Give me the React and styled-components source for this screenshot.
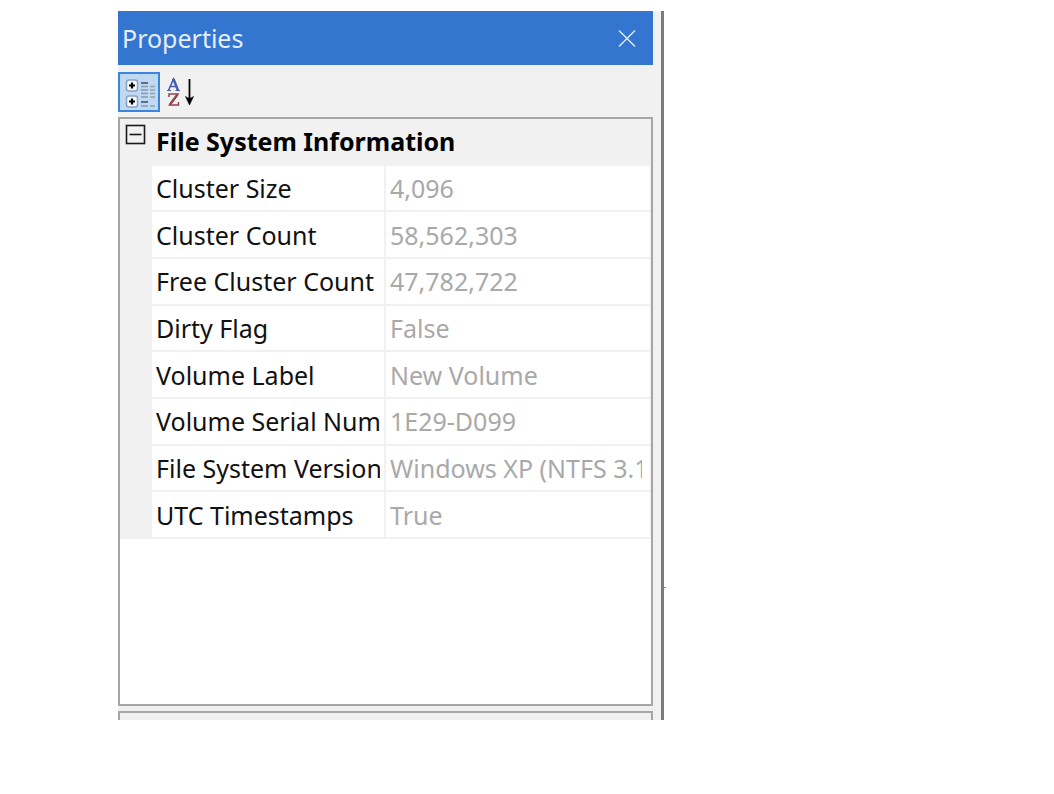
import React from 'react'
import styled, { createGlobalStyle } from 'styled-components'

const GlobalStyle = createGlobalStyle`
  body {
    margin: 0;
    background-color: #fff;
    font-family: 'Noto Sans', 'Open Sans', sans-serif;
  }
`

const Page = styled.main`
  padding: 11px 390px 74px 118px;
`

const Panel = styled.section`
  position: relative;
  min-width: 420px;
  box-sizing: border-box;
  padding-right: 8px;
  background-color: #f1f1f1;
  border-right: 3px solid #7b7b7b;
`

const SplitMark = styled.span`
  position: absolute;
  right: -5px;
  bottom: 132px;
  width: 2px;
  height: 1px;
  background-color: #8a8a8a;
`

const TitleBar = styled.header`
  display: flex;
  align-items: center;
  justify-content: space-between;
  height: 54px;
  padding: 0 16px 0 4px;
  background-color: #3375cf;
`

const Title = styled.h1`
  margin: 0;
  font-size: 25px;
  font-weight: 400;
  color: #e6eefa;
`

const CloseButton = styled.button`
  display: flex;
  padding: 0;
  border: 0;
  background: none;
`

const Toolbar = styled.div`
  display: flex;
  align-items: center;
  box-sizing: border-box;
  height: 52px;
  padding-top: 2px;
`

const ToolButton = styled.button`
  display: flex;
  align-items: center;
  justify-content: center;
  width: 42px;
  height: 40px;
  padding: 0;
  border: 2px solid ${(props) => (props.$active ? '#3a86de' : 'transparent')};
  background-color: ${(props) => (props.$active ? '#bfd9f2' : 'transparent')};
`

const GridBox = styled.div`
  box-sizing: border-box;
  min-height: 589px;
  border: 2px solid #a6a6a6;
  background-color: #fff;
`

const Table = styled.table`
  width: 100%;
  height: 420px;
  table-layout: fixed;
  border-collapse: separate;
  border-spacing: 0;
  font-size: 25px;
  line-height: 34px;
`

const GutterCol = styled.col`
  width: 32px;
`

const NameCol = styled.col`
  width: 234px;
`

const Gutter = styled.td`
  padding: 0;
  vertical-align: top;
  background-color: #f1f1f1;
`

const ToggleButton = styled.button`
  display: flex;
  margin: 5px 0 0 5px;
  padding: 0;
  border: 0;
  background: none;
`

const Category = styled.th`
  padding: 0 4px;
  border-bottom: 2px solid #f1f1f1;
  text-align: left;
  font-weight: 700;
  color: #000;
  background-color: #f1f1f1;
`

const Name = styled.th`
  padding: 0 4px;
  border-right: 2px solid #f1f1f1;
  border-bottom: 2px solid #f1f1f1;
  text-align: left;
  font-weight: 400;
  color: #111;
`

const Value = styled.td`
  padding: 0 8px 0 4px;
  border-right: 1px solid #f1f1f1;
  border-bottom: 2px solid #f1f1f1;
  color: #a9a9a9;
`

const Clip = styled.div`
  overflow: hidden;
  white-space: nowrap;
`

const HelpBox = styled.div`
  height: 7px;
  margin-top: 5px;
  border: 2px solid #a6a6a6;
  border-bottom: 0;
`

const rows = [
  ['Cluster Size', '4,096'],
  ['Cluster Count', '58,562,303'],
  ['Free Cluster Count', '47,782,722'],
  ['Dirty Flag', 'False'],
  ['Volume Label', 'New Volume'],
  ['Volume Serial Number', '1E29-D099'],
  ['File System Version', 'Windows XP (NTFS 3.1)'],
  ['UTC Timestamps', 'True'],
]

const CloseIcon = () => (
  <svg width="20" height="20" viewBox="0 0 20 20" aria-hidden="true">
    <path d="M2 2.500L18 18.500M18 2.500L2 18.500" stroke="#e3edf9" strokeWidth="1.4" fill="none" />
  </svg>
)

const CategorizedIcon = () => (
  <svg width="32" height="32" viewBox="0 0 32 32" aria-hidden="true">
    {[4, 20].map((y) => (
      <g key={y}>
        <rect x="3.5" y={y} width="11" height="11" rx="2.5" fill="#f8fafd" stroke="#8ba4c6" strokeWidth="1.5" />
        <path d={`M6 ${y + 5.5}h6M9 ${y + 2.5}v6`} stroke="#000" strokeWidth="2.2" />
      </g>
    ))}
    <path d="M18 7h7M18 26h7" stroke="#3f4a59" strokeWidth="1.5" />
    <path d="M18 10.500h7M18 14h7M18 17.500h7M18 21h7M18 30h7" stroke="#8c98ac" strokeWidth="1.5" />
    <path d="M27 10.500h5M27 14h5M27 17.500h5M27 21h5M27 30h5" stroke="#8fa3a8" strokeWidth="1.5" />
  </svg>
)

const SortIcon = () => (
  <svg width="30" height="32" viewBox="0 0 30 32" aria-hidden="true">
    <path d="M2.500 14.500L7.500 3L12 14.500M4.500 10.500H10" stroke="#4a5bb0" strokeWidth="1.600" fill="none" />
    <path d="M7.500 3L12 14.500" stroke="#4a5bb0" strokeWidth="2.400" />
    <path d="M1 14.500H5M9.500 14.500H14M6 3.500H8.500" stroke="#4a5bb0" strokeWidth="1.200" />
    <path d="M3 21V18H12L3.500 29H12.500V26" stroke="#974148" strokeWidth="1.500" fill="none" />
    <path d="M11.500 18.500L4 28.500" stroke="#974148" strokeWidth="2.400" />
    <path d="M23.500 3V25" stroke="#000" strokeWidth="1.800" />
    <path d="M19.500 20.500L22 22H25L27.500 20.500L23.500 29Z" fill="#000" stroke="#000" strokeWidth="0.600" />
  </svg>
)

const MinusIcon = () => (
  <svg width="21" height="21" viewBox="0 0 21 21" aria-hidden="true">
    <rect x="1.500" y="1.500" width="18" height="18" fill="none" stroke="#1a1a1a" strokeWidth="1.600" />
    <path d="M4.500 10.500H16.500" stroke="#1a1a1a" strokeWidth="1.600" />
  </svg>
)

export default function App() {
  return (
    <Page>
      <GlobalStyle />
      <Panel>
        <TitleBar>
          <Title>Properties</Title>
          <CloseButton type="button" aria-label="Close">
            <CloseIcon />
          </CloseButton>
        </TitleBar>
        <Toolbar>
          <ToolButton type="button" aria-label="Categorized" aria-pressed="true" $active>
            <CategorizedIcon />
          </ToolButton>
          <ToolButton type="button" aria-label="Alphabetical" aria-pressed="false">
            <SortIcon />
          </ToolButton>
        </Toolbar>
        <GridBox>
          <Table>
            <colgroup>
              <GutterCol />
              <NameCol />
              <col />
            </colgroup>
            <tbody>
              <tr>
                <Gutter>
                  <ToggleButton type="button" aria-label="Collapse" aria-expanded="true">
                    <MinusIcon />
                  </ToggleButton>
                </Gutter>
                <Category colSpan={2} scope="colgroup">
                  File System Information
                </Category>
              </tr>
              {rows.map(([name, value]) => (
                <tr key={name}>
                  <Gutter />
                  <Name scope="row">
                    <Clip>{name}</Clip>
                  </Name>
                  <Value>
                    <Clip>{value}</Clip>
                  </Value>
                </tr>
              ))}
            </tbody>
          </Table>
        </GridBox>
        <HelpBox />
        <SplitMark />
      </Panel>
    </Page>
  )
}
